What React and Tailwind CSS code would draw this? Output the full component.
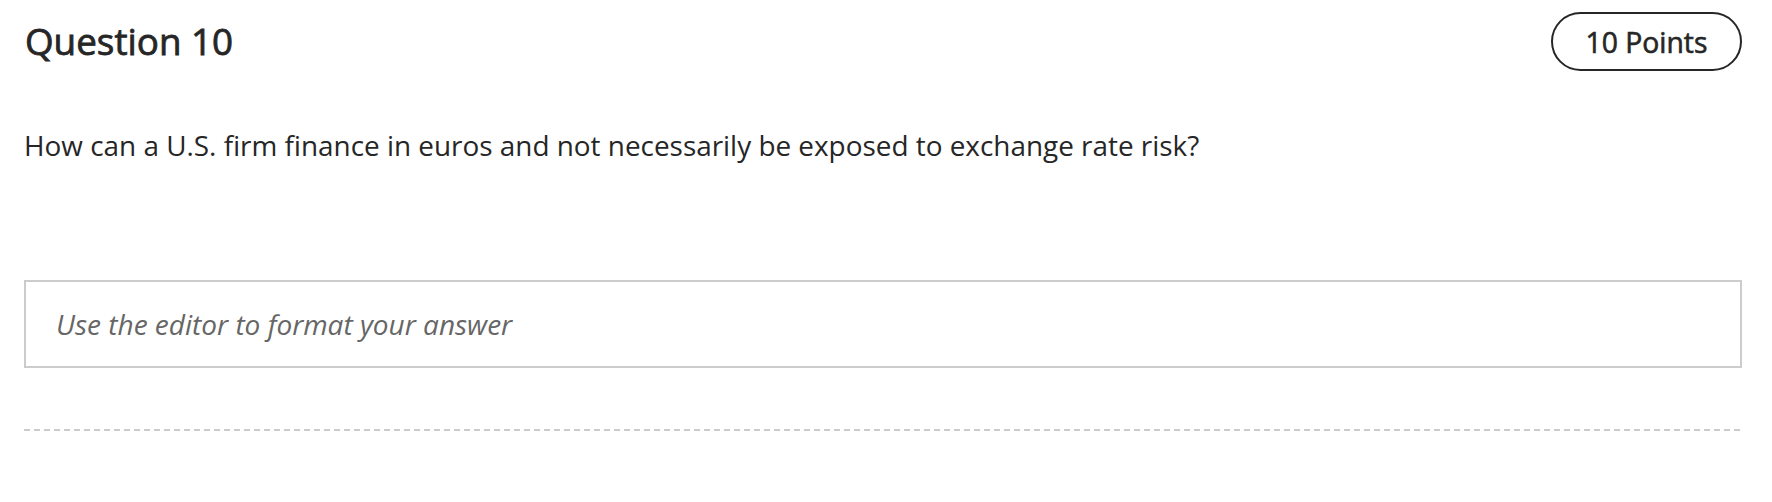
export default function App() {
  return (
    <div className="w-[1772px] h-[502px] bg-white pl-[24px] pr-[30px]" style={{ fontFamily: '"Open Sans", sans-serif' }}>
      <div className="flex items-center justify-between pt-[12px]">
        <h1 className="text-[36.8px] font-normal [-webkit-text-stroke:0.8px_#262626] text-[#262626] leading-none pl-[1px]">Question 10</h1>
        <div className="h-[59px] w-[191px] rounded-full border-2 border-[#262626] flex items-center justify-center pt-[1px] text-[28.3px] font-normal [-webkit-text-stroke:0.6px_#262626] text-[#262626]">
          10 Points
        </div>
      </div>
      <p className="mt-[61px] text-[27.9px] text-[#262626] leading-none">
        How can a U.S. firm finance in euros and not necessarily be exposed to exchange rate risk?
      </p>
      <div className="mt-[120px] h-[88px] border-2 border-[#cccccc] flex items-center pl-[30px]">
        <span className="italic text-[28px] text-[#666666]">Use the editor to format your answer</span>
      </div>
      <div className="mt-[61px] h-[2px] bg-[linear-gradient(to_right,#cccccc_6px,transparent_6px)] bg-[length:10px_2px] bg-repeat-x"></div>
    </div>
  );
}
